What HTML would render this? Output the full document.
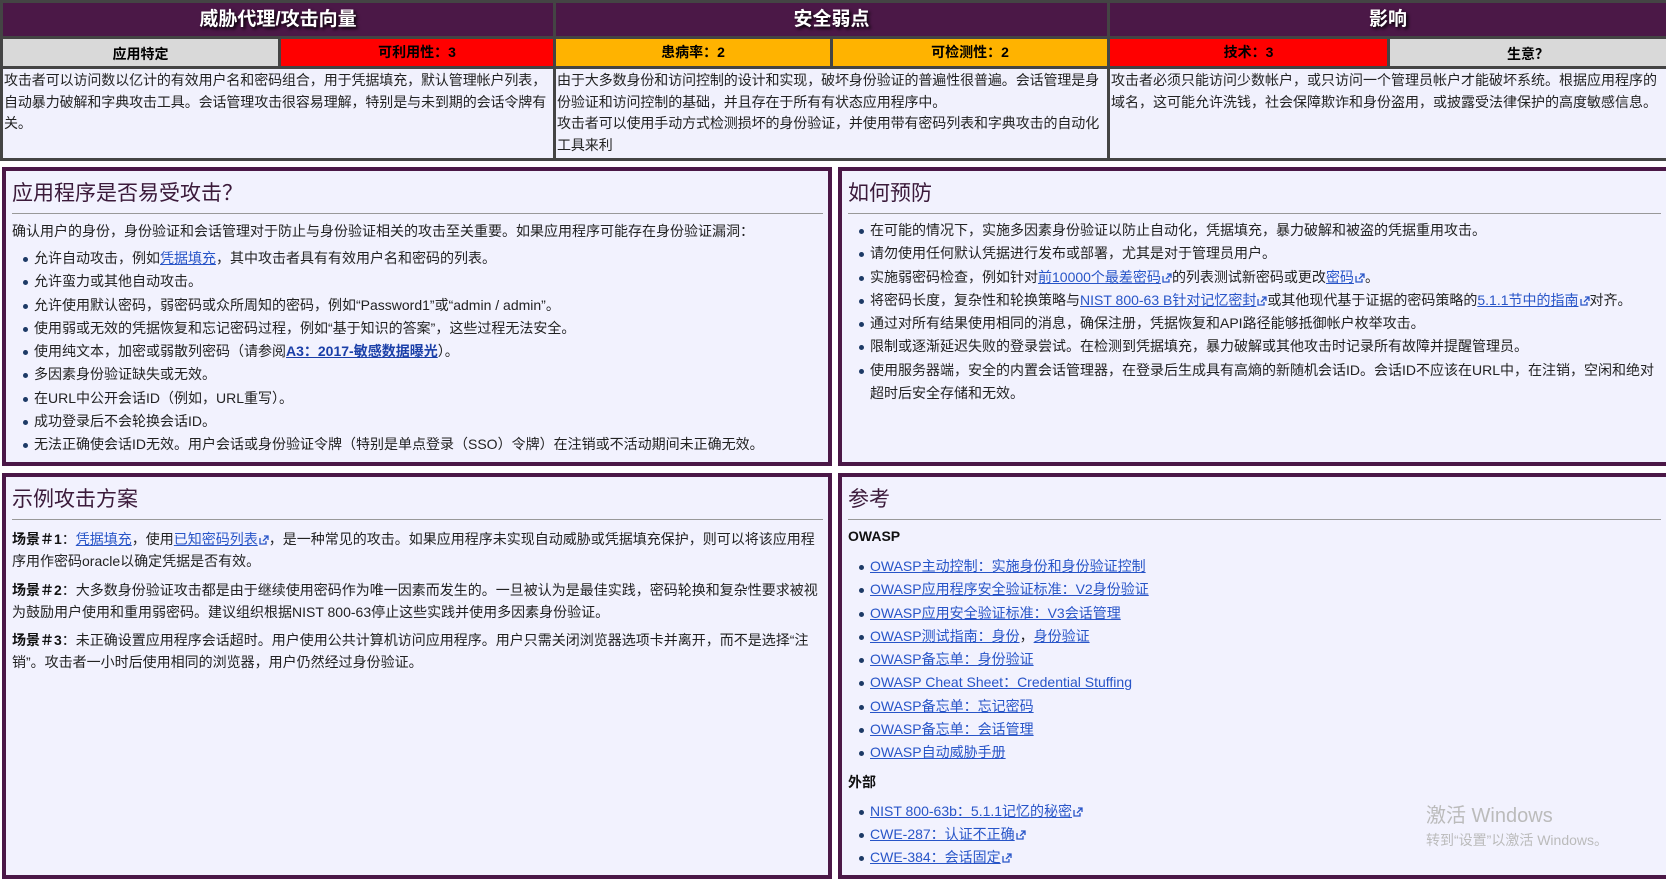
<!DOCTYPE html>
<html><head><meta charset="utf-8"><style>
*{margin:0;padding:0;box-sizing:border-box}
body{width:1666px;height:874px;overflow:hidden;background:#fff;font-family:"Liberation Sans","Noto Sans CJK SC",sans-serif;font-size:14px;color:#222;position:relative}
.a{position:absolute}
.g{background:#444}
.hd{background:#4b1847;color:#fff;font-weight:bold;font-size:19px;text-align:center;line-height:33px;text-shadow:2px 2px 3px #000}
.sh{font-weight:bold;font-size:14px;text-align:center;line-height:30px;color:#000}
.bd{background:#f1f1fd;line-height:21.5px;padding:1px 0 1px 1px;font-size:14px;color:#222}
.p{background:#f2f2fe;border:4px solid #4b1847;padding:0 5px 0 6px}
.p h2{font-weight:normal;font-size:21px;color:#3b1a3a;line-height:26px;padding-top:10px;padding-bottom:6px;border-bottom:1px solid #999;margin-bottom:2px}
.p ul{list-style:none;margin-left:12px}
.p li{position:relative;padding-left:10px;line-height:23.3px}
.p li:before{content:"";position:absolute;left:-1px;top:10px;width:5px;height:5px;border-radius:50%;background:#1d3a66}
a{color:#2855c8;text-decoration:underline}
.e{display:inline-block;width:10px;height:10px;vertical-align:-1px;margin-left:1px}
b{color:#111}
</style></head><body>
<div class="a g" style="left:0;top:0;width:1666px;height:161px"></div>
<div class="a hd" style="left:3px;top:3px;width:550px;height:33px">威胁代理/攻击向量</div>
<div class="a hd" style="left:556px;top:3px;width:551px;height:33px">安全弱点</div>
<div class="a hd" style="left:1110px;top:3px;width:556px;height:33px">影响</div>
<div class="a sh" style="left:3px;top:39px;width:275px;height:27px;background:#d9d9d9;line-height:30px">应用特定</div>
<div class="a sh" style="left:281px;top:39px;width:272px;height:27px;background:#ff0000;line-height:26px">可利用性：3</div>
<div class="a sh" style="left:556px;top:39px;width:274px;height:27px;background:#ffb300;line-height:26px">患病率：2</div>
<div class="a sh" style="left:833px;top:39px;width:274px;height:27px;background:#ffb300;line-height:26px">可检测性：2</div>
<div class="a sh" style="left:1110px;top:39px;width:277px;height:27px;background:#ff0000;line-height:26px">技术：3</div>
<div class="a sh" style="left:1390px;top:39px;width:276px;height:27px;background:#d9d9d9;line-height:30px">生意？</div>
<div class="a bd" style="left:3px;top:69px;width:550px;height:89px;letter-spacing:-0.1px">攻击者可以访问数以亿计的有效用户名和密码组合，用于凭据填充，默认管理帐户列表，自动暴力破解和字典攻击工具。会话管理攻击很容易理解，特别是与未到期的会话令牌有关。</div>
<div class="a bd" style="left:556px;top:69px;width:551px;height:89px;letter-spacing:-0.1px">由于大多数身份和访问控制的设计和实现，破坏身份验证的普遍性很普遍。会话管理是身份验证和访问控制的基础，并且存在于所有有状态应用程序中。<br>攻击者可以使用手动方式检测损坏的身份验证，并使用带有密码列表和字典攻击的自动化工具来利</div>
<div class="a bd" style="left:1110px;top:69px;width:556px;height:89px">攻击者必须只能访问少数帐户，或只访问一个管理员帐户才能破坏系统。根据应用程序的域名，这可能允许洗钱，社会保障欺诈和身份盗用，或披露受法律保护的高度敏感信息。</div>

<div class="a p" style="left:2px;top:167px;width:830px;height:299px">
<h2>应用程序是否易受攻击？</h2>
<div style="line-height:26px;margin-top:4px">确认用户的身份，身份验证和会话管理对于防止与身份验证相关的攻击至关重要。如果应用程序可能存在身份验证漏洞：</div>
<ul style="margin-top:3px">
<li>允许自动攻击，例如<a>凭据填充</a>，其中攻击者具有有效用户名和密码的列表。</li>
<li>允许蛮力或其他自动攻击。</li>
<li>允许使用默认密码，弱密码或众所周知的密码，例如“Password1”或“admin / admin”。</li>
<li>使用弱或无效的凭据恢复和忘记密码过程，例如“基于知识的答案”，这些过程无法安全。</li>
<li>使用纯文本，加密或弱散列密码（请参阅<a style="font-weight:bold;color:#1a3fa8">A3：2017-敏感数据曝光</a>）。</li>
<li>多因素身份验证缺失或无效。</li>
<li>在URL中公开会话ID（例如，URL重写）。</li>
<li>成功登录后不会轮换会话ID。</li>
<li>无法正确使会话ID无效。用户会话或身份验证令牌（特别是单点登录（SSO）令牌）在注销或不活动期间未正确无效。</li>
</ul></div>

<div class="a p" style="left:838px;top:167px;width:832px;height:299px">
<h2>如何预防</h2>
<ul style="margin-top:5px">
<li>在可能的情况下，实施多因素身份验证以防止自动化，凭据填充，暴力破解和被盗的凭据重用攻击。</li>
<li>请勿使用任何默认凭据进行发布或部署，尤其是对于管理员用户。</li>
<li>实施弱密码检查，例如针对<a>前10000个最差密码</a><svg class="e" viewBox="0 0 10 10"><path d="M1 3v6h6V6M5 1h4v4M9 1L4 6" fill="none" stroke="#2855c8" stroke-width="1.3"/></svg>的列表测试新密码或更改<a>密码</a><svg class="e" viewBox="0 0 10 10"><path d="M1 3v6h6V6M5 1h4v4M9 1L4 6" fill="none" stroke="#2855c8" stroke-width="1.3"/></svg>。</li>
<li>将密码长度，复杂性和轮换策略与<a>NIST 800-63 B针对记忆密封</a><svg class="e" viewBox="0 0 10 10"><path d="M1 3v6h6V6M5 1h4v4M9 1L4 6" fill="none" stroke="#2855c8" stroke-width="1.3"/></svg>或其他现代基于证据的密码策略的<a>5.1.1节中的指南</a><svg class="e" viewBox="0 0 10 10"><path d="M1 3v6h6V6M5 1h4v4M9 1L4 6" fill="none" stroke="#2855c8" stroke-width="1.3"/></svg>对齐。</li>
<li>通过对所有结果使用相同的消息，确保注册，凭据恢复和API路径能够抵御帐户枚举攻击。</li>
<li>限制或逐渐延迟失败的登录尝试。在检测到凭据填充，暴力破解或其他攻击时记录所有故障并提醒管理员。</li>
<li>使用服务器端，安全的内置会话管理器，在登录后生成具有高熵的新随机会话ID。会话ID不应该在URL中，在注销，空闲和绝对超时后安全存储和无效。</li>
</ul></div>

<div class="a p" style="left:2px;top:473px;width:830px;height:406px">
<h2>示例攻击方案</h2>
<div style="line-height:21.5px;margin-top:9px"><b>场景＃1</b>：<a>凭据填充</a>，使用<a>已知密码列表</a><svg class="e" viewBox="0 0 10 10"><path d="M1 3v6h6V6M5 1h4v4M9 1L4 6" fill="none" stroke="#2855c8" stroke-width="1.3"/></svg>，是一种常见的攻击。如果应用程序未实现自动威胁或凭据填充保护，则可以将该应用程序用作密码oracle以确定凭据是否有效。</div>
<div style="line-height:21.5px;margin-top:8px"><b>场景＃2</b>：大多数身份验证攻击都是由于继续使用密码作为唯一因素而发生的。一旦被认为是最佳实践，密码轮换和复杂性要求被视为鼓励用户使用和重用弱密码。建议组织根据NIST 800-63停止这些实践并使用多因素身份验证。</div>
<div style="line-height:21.5px;margin-top:7px"><b>场景＃3</b>：未正确设置应用程序会话超时。用户使用公共计算机访问应用程序。用户只需关闭浏览器选项卡并离开，而不是选择“注销”。攻击者一小时后使用相同的浏览器，用户仍然经过身份验证。</div>
</div>

<div class="a p" style="left:838px;top:473px;width:832px;height:406px">
<h2>参考</h2>
<div style="font-weight:bold;color:#111;line-height:24px;margin-top:4px">OWASP</div>
<ul style="margin-top:7px">
<li><a>OWASP主动控制：实施身份和身份验证控制</a></li>
<li><a>OWASP应用程序安全验证标准：V2身份验证</a></li>
<li><a>OWASP应用安全验证标准：V3会话管理</a></li>
<li><a>OWASP测试指南：身份</a>，<a>身份验证</a></li>
<li><a>OWASP备忘单：身份验证</a></li>
<li><a>OWASP Cheat Sheet：Credential Stuffing</a></li>
<li><a>OWASP备忘单：忘记密码</a></li>
<li><a>OWASP备忘单：会话管理</a></li>
<li><a>OWASP自动威胁手册</a></li>
</ul>
<div style="font-weight:bold;color:#111;line-height:24px;margin-top:5px">外部</div>
<ul style="margin-top:6px">
<li><a>NIST 800-63b：5.1.1记忆的秘密</a><svg class="e" viewBox="0 0 10 10"><path d="M1 3v6h6V6M5 1h4v4M9 1L4 6" fill="none" stroke="#2855c8" stroke-width="1.3"/></svg></li>
<li><a>CWE-287：认证不正确</a><svg class="e" viewBox="0 0 10 10"><path d="M1 3v6h6V6M5 1h4v4M9 1L4 6" fill="none" stroke="#2855c8" stroke-width="1.3"/></svg></li>
<li><a>CWE-384：会话固定</a><svg class="e" viewBox="0 0 10 10"><path d="M1 3v6h6V6M5 1h4v4M9 1L4 6" fill="none" stroke="#2855c8" stroke-width="1.3"/></svg></li>
</ul></div>

<div class="a" style="left:1426px;top:803px;font-size:20px;color:#bbb;line-height:26px">激活 Windows</div>
<div class="a" style="left:1426px;top:830px;font-size:14px;color:#bbb;line-height:20px">转到“设置”以激活 Windows。</div>
</body></html>
